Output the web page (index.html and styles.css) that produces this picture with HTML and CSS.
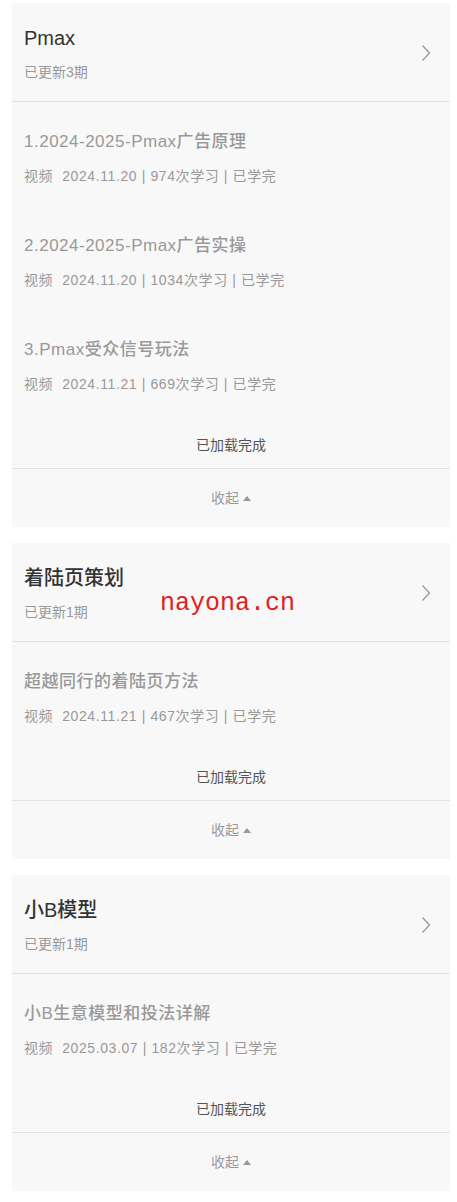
FILE: index.html
```html
<!DOCTYPE html>
<html lang="zh-CN">
<head>
  <meta charset="UTF-8" />
  <meta name="viewport" content="width=device-width, initial-scale=1.0"/>
  <title>课程目录</title>
  <link rel="stylesheet" href="styles.css">
</head>
<body>

<div class="card">
  <div class="card-head">
    <div class="head-text">
      <h2>Pmax</h2>
      <p>已更新3期</p>
    </div>
    <svg class="chevron" width="10" height="18" viewBox="0 0 10 18"><polyline points="1.5,1.5 8.5,9 1.5,16.5" fill="none" stroke="#999" stroke-width="1.3"/></svg>
  </div>
  <ul class="lessons">
    <li>
      <div class="lesson-title">1.2024-2025-Pmax广告原理</div>
      <div class="lesson-meta">视频&nbsp; 2024.11.20 | 974次学习 | 已学完</div>
    </li>
    <li>
      <div class="lesson-title">2.2024-2025-Pmax广告实操</div>
      <div class="lesson-meta">视频&nbsp; 2024.11.20 | 1034次学习 | 已学完</div>
    </li>
    <li>
      <div class="lesson-title">3.Pmax受众信号玩法</div>
      <div class="lesson-meta">视频&nbsp; 2024.11.21 | 669次学习 | 已学完</div>
    </li>
  </ul>
  <div class="loaded">已加载完成</div>
  <div class="collapse">收起 <span class="tri"></span></div>
</div>

<div class="card">
  <div class="card-head">
    <div class="head-text">
      <h2>着陆页策划</h2>
      <p>已更新1期</p>
    </div>
    <svg class="chevron" width="10" height="18" viewBox="0 0 10 18"><polyline points="1.5,1.5 8.5,9 1.5,16.5" fill="none" stroke="#999" stroke-width="1.3"/></svg>
  </div>
  <ul class="lessons">
    <li>
      <div class="lesson-title">超越同行的着陆页方法</div>
      <div class="lesson-meta">视频&nbsp; 2024.11.21 | 467次学习 | 已学完</div>
    </li>
  </ul>
  <div class="loaded">已加载完成</div>
  <div class="collapse">收起 <span class="tri"></span></div>
</div>

<div class="card">
  <div class="card-head">
    <div class="head-text">
      <h2>小B模型</h2>
      <p>已更新1期</p>
    </div>
    <svg class="chevron" width="10" height="18" viewBox="0 0 10 18"><polyline points="1.5,1.5 8.5,9 1.5,16.5" fill="none" stroke="#999" stroke-width="1.3"/></svg>
  </div>
  <ul class="lessons">
    <li>
      <div class="lesson-title">小B生意模型和投法详解</div>
      <div class="lesson-meta">视频&nbsp; 2025.03.07 | 182次学习 | 已学完</div>
    </li>
  </ul>
  <div class="loaded">已加载完成</div>
  <div class="collapse">收起 <span class="tri"></span></div>
</div>

<div class="watermark">nayona.cn</div>

</body>
</html>
```

FILE: styles.css
```css
body {
  font-family: 'Liberation Sans', 'Noto Sans CJK SC', sans-serif;
  background-color: #fff;
  color: #333;
  margin: 0;
  padding-top: 3px;
  position: relative;
}

.card {
  background-color: #f8f8f8;
  margin: 0 7px 16px 12px;
}

.card-head {
  display: flex;
  align-items: center;
  justify-content: space-between;
  padding: 21px 19px 19px 12px;
  border-bottom: 1px solid #e3e3e3;
}

.card-head h2 {
  margin: 0;
  font-size: 20px;
  font-weight: 500;
  line-height: 28px;
  color: #333;
}

.card-head p {
  margin: 10px 0 0;
  font-size: 14px;
  line-height: 20px;
  color: #999;
}

.lessons {
  list-style: none;
  margin: 0;
  padding: 0;
}

.lessons li {
  padding: 28px 12px 20px;
  height: 56px;
}

.lesson-title {
  font-size: 17px;
  line-height: 24px;
  font-weight: 500;
  letter-spacing: 0.5px;
  color: #999;
}

.lesson-meta {
  margin-top: 12px;
  font-size: 14px;
  line-height: 20px;
  letter-spacing: 0.6px;
  color: #999;
}

.loaded {
  text-align: center;
  font-size: 14px;
  line-height: 20px;
  color: #555;
  padding: 21px 0 13px;
  border-bottom: 1px solid #e3e3e3;
}

.collapse {
  text-align: center;
  font-size: 14px;
  line-height: 20px;
  color: #999;
  padding: 19px 0 19px;
}

.tri {
  display: inline-block;
  width: 0;
  height: 0;
  border-left: 4px solid transparent;
  border-right: 4px solid transparent;
  border-bottom: 5px solid #999;
  vertical-align: 2px;
}

.watermark {
  position: absolute;
  left: 160px;
  top: 588px;
  font-family: 'Liberation Mono', monospace;
  font-size: 25px;
  line-height: 32px;
  color: #e02020;
}
```
